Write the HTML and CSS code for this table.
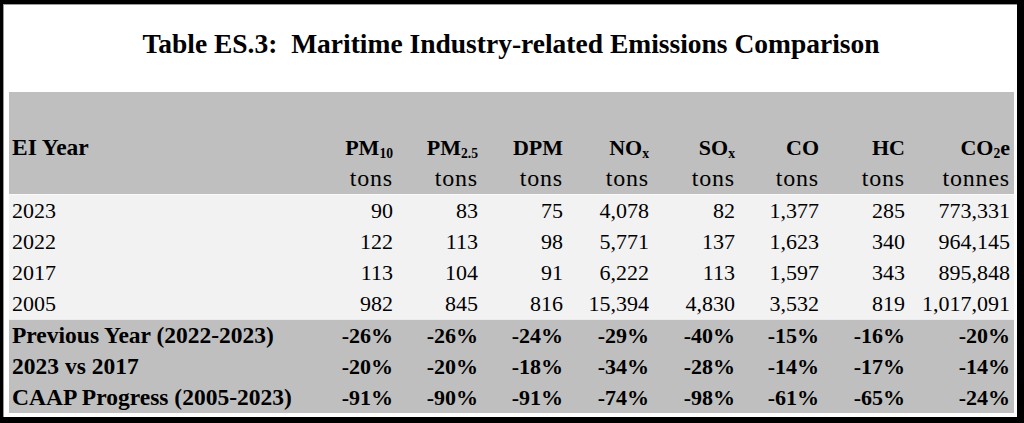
FILE: index.html
```html
<!DOCTYPE html>
<html lang="en">
<head>
<meta charset="utf-8">
<title>Table ES.3</title>
<link rel="stylesheet" href="styles.css">
</head>
<body>
<div class="frame">
  <h1 class="title">Table ES.3:&nbsp; Maritime Industry-related Emissions Comparison</h1>
  <table class="emis">
    <colgroup>
      <col class="c-name">
      <col class="c-num"><col class="c-num"><col class="c-num">
      <col class="c-num2"><col class="c-num2"><col class="c-num3">
      <col class="c-num2"><col class="c-last">
    </colgroup>
    <thead>
      <tr class="h1">
        <th class="lab">EI Year</th>
        <th>PM<sub class="sb">10</sub></th>
        <th>PM<sub class="sb">2.5</sub></th>
        <th>DPM</th>
        <th>NO<sub class="sb">x</sub></th>
        <th>SO<sub class="sb">x</sub></th>
        <th>CO</th>
        <th>HC</th>
        <th>CO<sub class="sb">2</sub>e</th>
      </tr>
      <tr class="h2">
        <th class="lab"></th>
        <td>tons</td><td>tons</td><td>tons</td><td>tons</td><td>tons</td><td>tons</td><td>tons</td><td>tonnes</td>
      </tr>
    </thead>
    <tbody class="data">
      <tr class="first"><td class="lab">2023</td><td>90</td><td>83</td><td>75</td><td>4,078</td><td>82</td><td>1,377</td><td>285</td><td>773,331</td></tr>
      <tr><td class="lab">2022</td><td>122</td><td>113</td><td>98</td><td>5,771</td><td>137</td><td>1,623</td><td>340</td><td>964,145</td></tr>
      <tr><td class="lab">2017</td><td>113</td><td>104</td><td>91</td><td>6,222</td><td>113</td><td>1,597</td><td>343</td><td>895,848</td></tr>
      <tr><td class="lab">2005</td><td>982</td><td>845</td><td>816</td><td>15,394</td><td>4,830</td><td>3,532</td><td>819</td><td>1,017,091</td></tr>
    </tbody>
    <tbody class="cmp">
      <tr class="first"><td class="lab">Previous Year (2022-2023)</td><td>-26%</td><td>-26%</td><td>-24%</td><td>-29%</td><td>-40%</td><td>-15%</td><td>-16%</td><td>-20%</td></tr>
      <tr><td class="lab">2023 vs 2017</td><td>-20%</td><td>-20%</td><td>-18%</td><td>-34%</td><td>-28%</td><td>-14%</td><td>-17%</td><td>-14%</td></tr>
      <tr><td class="lab">CAAP Progress (2005-2023)</td><td>-91%</td><td>-90%</td><td>-91%</td><td>-74%</td><td>-98%</td><td>-61%</td><td>-65%</td><td>-24%</td></tr>
    </tbody>
  </table>
</div>
</body>
</html>
```
FILE: styles.css
```css
html, body {
  margin: 0;
  padding: 0;
  background: #000;
}
body {
  padding: 4px 7px 6px 3px;
  height: 423px;
  box-sizing: border-box;
  font-family: "Liberation Serif", "Times New Roman", serif;
  color: #000;
}
.frame {
  background: #fff;
  height: 413px;
  box-sizing: border-box;
  padding: 0 4px 4px 5px;
  border-left: 1px solid #9a9a9a;
  border-top: 1px solid #9a9a9a;
}
.title {
  margin: 0;
  padding: 25px 0 34px 0;
  height: 28px;
  line-height: 28px;
  font-size: 27.5px;
  font-weight: bold;
  text-align: center;
  color: #000;
}
.emis {
  width: 1005px;
  table-layout: fixed;
  border-collapse: collapse;
  font-size: 22px;
}
.c-name { width: 303px; }
.c-num { width: 85px; }
.c-num2 { width: 86px; }
.c-num3 { width: 84px; }
.c-last { width: 105px; }
.emis th, .emis td {
  padding: 0 4px 0 0;
  text-align: right;
  white-space: nowrap;
  line-height: 31px;
}
.emis .lab {
  text-align: left;
  padding-left: 3px;
}
thead {
  background: #bfbfbf;
}
.h1 th {
  height: 71px;
  vertical-align: bottom;
  font-weight: bold;
}
.h1 th.lab {
  font-size: 23.5px;
}
.h2 td {
  height: 31px;
  font-weight: normal;
  font-size: 24px;
  letter-spacing: 0.8px;
}
.sb {
  font-size: 0.62em;
  line-height: 0;
  vertical-align: -0.2em;
}
.data {
  background: #f2f2f2;
}
.data td {
  height: 31px;
}
.data tr.first td {
  border-top: 1px solid #fafafa;
}
.cmp {
  background: #bfbfbf;
}
.cmp td {
  height: 31px;
  font-weight: bold;
}
.cmp td.lab {
  font-size: 23.5px;
}
.cmp tr.first td {
  border-top: 1px solid #ececec;
}
```
